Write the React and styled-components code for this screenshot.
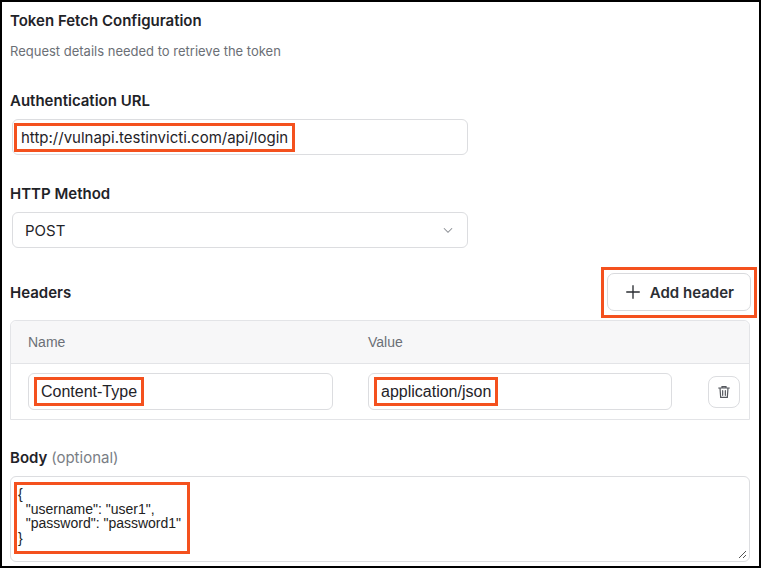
import React from "react";
import styled, { createGlobalStyle } from "styled-components";

const Global = createGlobalStyle`
  html, body { margin: 0; padding: 0; background: #fff; }
  body { font-family: Inter, "Noto Sans", sans-serif; color: #1f2328; }
`;

const Frame = styled.div`
  box-sizing: border-box;
  width: 761px;
  height: 568px;
  border: 2px solid #000;
  padding: 9px 9px 0 8px;
  overflow: hidden;
`;
const Title = styled.div`
  font-size: 15px; font-weight: 600; line-height: 20px;
`;
const Sub = styled.div`
  font-size: 13px; color: #6b6f76; margin-top: 11px; line-height: 18px;
`;
const Label = styled.div`
  font-size: 15px; font-weight: 600; line-height: 20px;
  margin-top: ${p => p.$mt || 0}px; margin-bottom: 8px;
`;
const Muted = styled.span` font-weight: 400; color: #7a7e85; `;
const Field = styled.div`
  box-sizing: border-box;
  width: ${p => p.$w || "456px"};
  height: ${p => p.$h || 36}px;
  margin-left: ${p => p.$ml ?? 2}px;
  border: 1px solid #dcdde0; border-radius: 6px;
  display: flex; align-items: center; justify-content: space-between;
  padding: 0 12px 0 ${p => p.$pl ?? 1}px;
  font-size: 15px; background: #fff;
`;
const Mark = styled.span`
  display: inline-block;
  border: 3px solid #f4511e;
  padding: 2px 4px 1px 4px;
  line-height: 20px;
  font-family: ${p => p.$narrow ? '"Liberation Sans Narrow", "Liberation Sans", sans-serif' : "inherit"};
  font-size: ${p => p.$fs || 15}px;
`;
const Plain = styled.span` padding-left: 12px; font-size: 15px; `;
const HeaderBar = styled.div`
  display: flex; justify-content: space-between; align-items: center;
  margin-top: 19px;
`;
const Highlight = styled.div`
  border: 3px solid #f4511e; padding: 3px 3px 4px 3px; margin-right: -7px;
`;
const Button = styled.button`
  display: flex; align-items: center; gap: 8px;
  height: 38px; padding: 0 16px 0 16px;
  border: 1px solid #d9dadd; border-radius: 7px; background: #fff;
  font-family: Inter, sans-serif; font-size: 15px; font-weight: 600; color: #2b2e33;
`;
const Table = styled.div`
  margin-top: 2px; border: 1px solid #e3e4e7; border-radius: 6px 6px 0 0;
  border-bottom: 1px solid #e3e4e7;
`;
const THead = styled.div`
  display: grid; grid-template-columns: 340px 1fr; height: 42px; align-items: center;
  background: #f7f7f8; border-bottom: 1px solid #e3e4e7; border-radius: 6px 6px 0 0;
  font-family: "Liberation Sans", sans-serif; font-size: 14px; color: #6b6f76;
  padding-left: 17px;
`;
const TRow = styled.div`
  display: grid; grid-template-columns: 305px 305px 1fr; column-gap: 35px;
  align-items: center; height: 55px; padding-left: 17px; padding-right: 14px;
`;
const Trash = styled.div`
  justify-self: end; width: 32px; height: 32px; box-sizing: border-box;
  border: 1px solid #dcdde0; border-radius: 8px;
  display: flex; align-items: center; justify-content: center;
`;
const Area = styled.div`
  box-sizing: border-box; position: relative;
  height: 86px; border: 1px solid #dcdde0; border-radius: 6px; padding: 5px 3px;
`;
const Code = styled.pre`
  display: inline-block; margin: 0; border: 3px solid #f4511e; padding: 2px 6px 6px 1px;
  font-family: "Liberation Sans", sans-serif; font-size: 14px; line-height: 14.5px; color: #222;
`;
const Grip = styled.svg` position: absolute; right: 2px; bottom: 2px; `;

export default function App() {
  return (
    <Frame>
      <Global />
      <Title>Token Fetch Configuration</Title>
      <Sub>Request details needed to retrieve the token</Sub>
      <Label $mt={31}>Authentication URL</Label>
      <Field>
        <Mark>http://vulnapi.testinvicti.com/api/login</Mark>
      </Field>
      <Label $mt={29}>HTTP Method</Label>
      <Field $pl={0}>
        <Plain>POST</Plain>
        <svg width="14" height="14" viewBox="0 0 24 24" fill="none" stroke="#8a8d93" strokeWidth="1.8"><path d="M5 9l7 7 7-7" /></svg>
      </Field>
      <HeaderBar>
        <Label style={{ marginBottom: 0 }}>Headers</Label>
        <Highlight>
          <Button>
            <svg width="18" height="18" viewBox="0 0 24 24" fill="none" stroke="#2b2e33" strokeWidth="1.8"><path d="M12 3v18M3 12h18" /></svg>
            Add header
          </Button>
        </Highlight>
      </HeaderBar>
      <Table>
        <THead><span>Name</span><span>Value</span></THead>
        <TRow>
          <Field $w="305px" $h={37} $ml={0} $pl={5}><Mark $narrow $fs={16}>Content-Type</Mark></Field>
          <Field $w="304px" $h={37} $ml={0} $pl={5}><Mark $narrow $fs={16}>application/json</Mark></Field>
          <Trash>
            <svg width="16" height="16" viewBox="0 0 24 24" fill="none" stroke="#55585e" strokeWidth="1.8" strokeLinecap="round"><path d="M4 6h16M9 6V4h6v2M6 6l1 14h10l1-14M10 10v7M14 10v7" /></svg>
          </Trash>
        </TRow>
      </Table>
      <Label $mt={28}>Body <Muted>(optional)</Muted></Label>
      <Area>
        <Code>{'{\n  "username": "user1",\n  "password": "password1"\n}'}</Code>
        <Grip width="10" height="10" viewBox="0 0 10 10" stroke="#555" strokeWidth="1"><path d="M9 2L2 9M9 6L6 9" /></Grip>
      </Area>
    </Frame>
  );
}
